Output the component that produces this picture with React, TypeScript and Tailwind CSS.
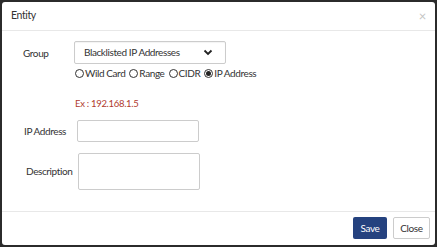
import React, { useState } from 'react'

const Radio = ({ label, checked, onClick }: { label: string; checked: boolean; onClick: () => void }) => (
  <label className="flex items-center cursor-pointer whitespace-nowrap" onClick={onClick}>
    <span className="w-[9px] h-[9px] rounded-full border border-[#333] flex items-center justify-center mr-[1px] shrink-0">
      {checked && <span className="w-[5px] h-[5px] rounded-full bg-[#222]" />}
    </span>
    <span>{label}</span>
  </label>
)

const App = () => {
  const [type, setType] = useState('IP Address')

  return (
    <div className="w-[437px] h-[247px] bg-[#2b2b2b] p-[2px] font-['Lato',sans-serif] text-[10px] tracking-[-0.4px] text-[#333]">
      <div className="w-full h-full bg-white rounded-[3px] flex flex-col">
        <div className="h-[29px] flex items-center justify-between pl-[9px] pr-[9px] border-b border-[#e8e8e8]">
          <span className="text-[10.5px] text-[#333]">Entity</span>
          <span className="text-[#c4c4c4] text-[13px] leading-none">×</span>
        </div>

        <div className="flex-1 pt-[10px]">
          <div className="flex items-start">
            <div className="w-[72px] shrink-0 pl-[21px] pt-[5px]">Group</div>
            <div className="flex flex-col">
              <div className="w-[152px] h-[23px] border border-[#ccc] rounded-[2px] flex items-center justify-between pl-[9px] pr-[12px] whitespace-nowrap shadow-[inset_0_1px_1px_rgba(0,0,0,0.05)]">
                <span>Blacklisted IP Addresses</span>
                <svg width="10" height="7" viewBox="0 0 10 7">
                  <path d="M1.5 1.5 L5 5 L8.5 1.5" stroke="#222" strokeWidth="1.8" fill="none" />
                </svg>
              </div>
              <div className="flex items-center gap-[4px] mt-[2px] ml-[1px] text-[10px] tracking-[-0.4px]">
                {['Wild Card', 'Range', 'CIDR', 'IP Address'].map((t) => (
                  <Radio key={t} label={t} checked={type === t} onClick={() => setType(t)} />
                ))}
              </div>
              <div className="text-[#b03a2e] text-[9.5px] tracking-[-0.3px] mt-[16px] ml-[1px]">Ex : 192.168.1.5</div>
            </div>
          </div>

          <div className="flex items-center mt-[9px]">
            <div className="w-[75px] shrink-0 pl-[22px] whitespace-nowrap">IP Address</div>
            <input className="w-[122px] h-[22px] border border-[#ccc] rounded-[2px] outline-none px-2" />
          </div>

          <div className="flex items-center mt-[11px]">
            <div className="w-[76px] shrink-0 pl-[24px] whitespace-nowrap">Description</div>
            <textarea className="w-[122px] h-[37px] border border-[#ccc] rounded-[2px] outline-none px-2 resize-none" />
          </div>
        </div>

        <div className="h-[34px] border-t border-[#e8e8e8] flex items-center justify-end gap-[6px] pr-[5px] pb-[1px]">
          <button className="h-[22px] w-[34px] bg-[#25427f] text-white rounded-[2px] text-[10px]">Save</button>
          <button className="h-[22px] w-[37px] bg-white border border-[#ccc] text-[#333] rounded-[2px] text-[10px]">Close</button>
        </div>
      </div>
    </div>
  )
}

export default App
